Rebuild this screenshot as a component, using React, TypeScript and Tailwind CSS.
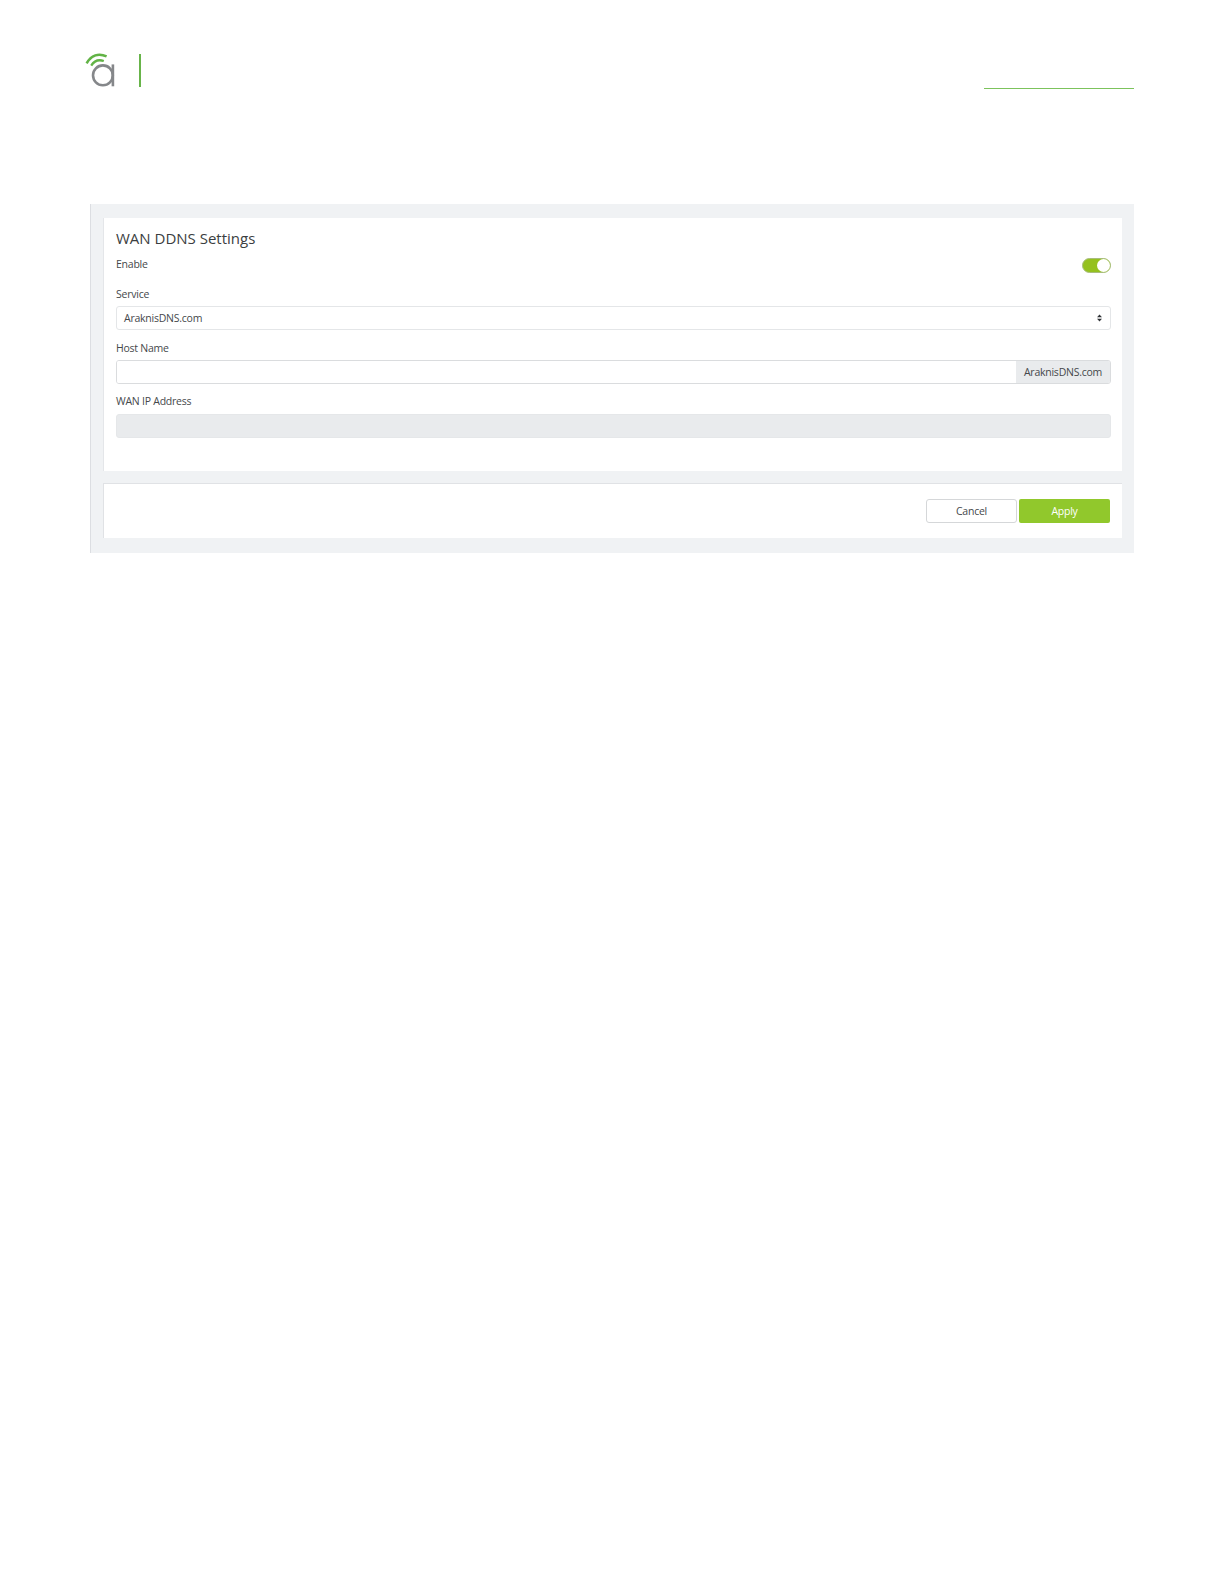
import React from 'react';

const LogoMark: React.FC = () => (
    <svg width="32" height="36" viewBox="0 0 32 36" fill="none" aria-hidden="true">
        <path d="M1.6 11.4C6.2 3.2 13.5 .8 21.6 4.4" stroke="#62b346" strokeWidth="2.5" />
        <path d="M6.2 13.6C9.2 8.8 13.6 7.2 18.8 9" stroke="#62b346" strokeWidth="2.3" />
        <circle cx="17.9" cy="23.3" r="9.9" stroke="#85878a" strokeWidth="2.6" />
        <path d="M27.9 12.4V34.3" stroke="#85878a" strokeWidth="2.6" />
    </svg>
);

const FieldLabel: React.FC<{ children: React.ReactNode }> = ({ children }) => (
    <div className="h-4 leading-4">{children}</div>
);

const Toggle: React.FC = () => (
    <button role="switch" aria-checked="true" aria-label="Enable" className="flex h-[15px] w-[29px] items-center justify-end rounded-full border border-[#a8bd7c] bg-[#95c11f]">
        <span className="size-[13px] rounded-full bg-white" />
    </button>
);

const App: React.FC = () => {
    return (
        <div className="min-h-[1584px] w-[1224px] bg-white font-['Open_Sans',sans-serif] text-[10.5px] tracking-[-0.24px] text-[#45484b]">
            <header className="flex h-[204px] items-start justify-between pr-[90px] pl-[85px]">
                <div className="flex pt-[52px]">
                    <LogoMark />
                    <div className="mt-[2px] ml-[22px] h-[33px] w-[2px] bg-[#68b44a]" />
                </div>
                <div className="mt-[88px] h-px w-[150px] bg-[#7cc35c]" />
            </header>

            <main className="ml-[90px] h-[349px] w-[1044px] border-l border-[#dcdee2] bg-[#f0f2f4] pt-[14px] pl-[12px]">
                <section className="h-[253px] w-[1019px] border-l border-[#e4e6e9] bg-white pr-[11px] pl-[12px] pt-[9px]">
                    <h1 className="h-[22px] text-[15px] leading-[22px] tracking-normal text-[#3b3e41]">WAN DDNS Settings</h1>
                    <div className="mt-[7px] flex justify-between">
                        <FieldLabel>Enable</FieldLabel>
                        <div className="mt-[2px]"><Toggle /></div>
                    </div>
                    <div className="mt-[13px]"><FieldLabel>Service</FieldLabel></div>
                    <div className="mt-[4px] flex h-6 items-center justify-between rounded-[3px] border border-[#e4e6e8] pr-[8px] pl-[7px]">
                        <span className="pt-[2px]">AraknisDNS.com</span>
                        <svg width="5" height="8" viewBox="0 0 5 8" fill="#303336" aria-hidden="true">
                            <path d="M2.5 .5 5 3.3H0zM2.5 7.5 0 4.7h5z" />
                        </svg>
                    </div>
                    <div className="mt-[10px]"><FieldLabel>Host Name</FieldLabel></div>
                    <div className="mt-[4px] flex h-6 overflow-hidden rounded-[3px] border border-[#dadcde]">
                        <div className="flex-1 bg-white" />
                        <div className="flex w-[94px] items-center justify-center bg-[#e9ebed] pt-[2px]">AraknisDNS.com</div>
                    </div>
                    <div className="mt-[9px]"><FieldLabel>WAN IP Address</FieldLabel></div>
                    <div className="mt-[5px] h-6 rounded-[3px] border border-[#e5e7e9] bg-[#e9ebed]" />
                </section>

                <section className="mt-[12px] flex h-[55px] w-[1019px] justify-end gap-[2px] border-t border-l border-[#e0e2e5] bg-white pt-[15px] pr-[12px]">
                    <button className="h-6 w-[91px] rounded-[3px] border border-[#d5d7d9] bg-white pt-[2px]">Cancel</button>
                    <button className="h-6 w-[91px] rounded-[2px] bg-[#91c82c] pt-[2px] text-white">Apply</button>
                </section>
            </main>
        </div>
    );
};

export default App;
